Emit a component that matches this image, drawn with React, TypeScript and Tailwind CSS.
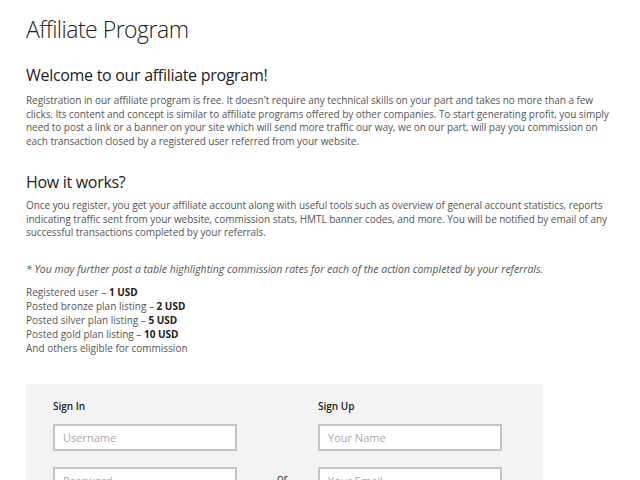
import React from "react";

const body = "text-[10px] leading-[13.7px] text-[#555] tracking-[-0.05px] whitespace-nowrap";

function Field({ placeholder, type }: { placeholder: string; type?: string }) {
  return (
    <input
      placeholder={placeholder}
      type={type}
      className="h-[27px] w-[184px] border-2 border-[#c4c4c4] bg-white px-[8px] text-[11px] text-[#333] placeholder:text-[#aaa] outline-none font-['Open_Sans',sans-serif]"
    />
  );
}

export default function App() {
  return (
    <div className="min-h-[480px] overflow-hidden bg-white px-[26px] pt-[11px] font-['Open_Sans',sans-serif]">
      <h1 className="text-[23px] leading-[36px] font-light tracking-[-0.5px] text-[#222]">Affiliate Program</h1>
      <h2 className="mt-[16px] text-[16px] leading-[24px] tracking-[-0.3px] text-[#222]">Welcome to our affiliate program!</h2>
      <p className={`mt-[7px] ${body}`}>
        Registration in our affiliate program is free. It doesn't require any technical skills on your part and takes no more than a few
        <br />
        clicks. Its content and concept is similar to affiliate programs offered by other companies. To start generating profit, you simply
        <br />
        need to post a link or a banner on your site which will send more traffic our way, we on our part, will pay you commission on
        <br />
        each transaction closed by a registered user referred from your website.
      </p>
      <h2 className="mt-[21px] text-[16px] leading-[24px] tracking-[-0.3px] text-[#222]">How it works?</h2>
      <p className={`mt-[5px] ${body}`}>
        Once you register, you get your affiliate account along with useful tools such as overview of general account statistics, reports
        <br />
        indicating traffic sent from your website, commission stats, HMTL banner codes, and more. You will be notified by email of any
        <br />
        successful transactions completed by your referrals.
      </p>
      <p className="mt-[23px] text-[10.5px] leading-[13.7px] italic text-[#555] whitespace-nowrap">
        * You may further post a table highlighting commission rates for each of the action completed by your referrals.
      </p>
      <ul className="mt-[8px] text-[10px] leading-[14px] text-[#555]">
        <li>Registered user – <b className="font-bold text-[#222]">1 USD</b></li>
        <li>Posted bronze plan listing – <b className="font-bold text-[#222]">2 USD</b></li>
        <li>Posted silver plan listing – <b className="font-bold text-[#222]">5 USD</b></li>
        <li>Posted gold plan listing – <b className="font-bold text-[#222]">10 USD</b></li>
        <li>And others eligible for commission</li>
      </ul>
      <div className="mt-[29px] w-[517px] bg-[#f3f3f3] pl-[27px] pt-[14px] pb-[20px]">
        <div className="flex items-start">
          <div className="w-[184px]">
            <div className="text-[10px] leading-[16px] font-semibold text-[#222]">Sign In</div>
            <div className="mt-[10px] flex flex-col gap-[16px]">
              <Field placeholder="Username" />
              <Field placeholder="Password" type="password" />
            </div>
          </div>
          <div className="w-[81px] pl-[10px] pt-[72px] text-center text-[11px] leading-[16px] text-[#333]">or</div>
          <div className="w-[184px]">
            <div className="text-[10px] leading-[16px] font-semibold text-[#222]">Sign Up</div>
            <div className="mt-[10px] flex flex-col gap-[16px]">
              <Field placeholder="Your Name" />
              <Field placeholder="Your Email" />
            </div>
          </div>
        </div>
      </div>
    </div>
  );
}
